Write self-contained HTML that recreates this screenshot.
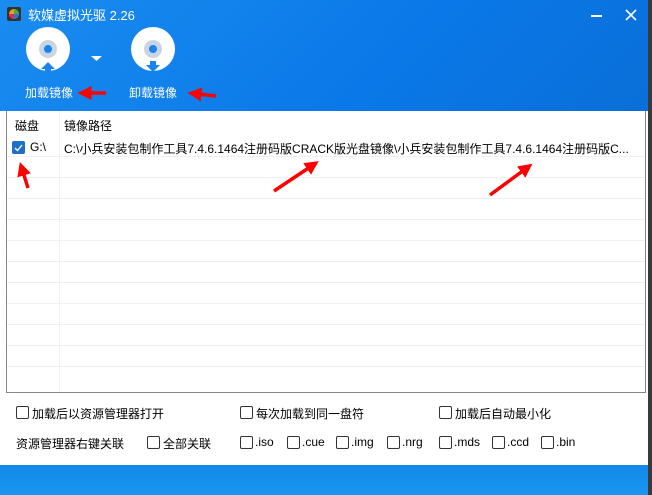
<!DOCTYPE html>
<html><head><meta charset="utf-8"><style>
*{margin:0;padding:0;box-sizing:border-box}
body{width:652px;height:495px;overflow:hidden;background:#fff;position:relative;font-family:"Liberation Sans","Noto Sans CJK SC",sans-serif;font-size:12px;color:#000}
.hdr{position:absolute;left:0;top:0;width:648px;height:111px;background:linear-gradient(135deg,#1a8cf0,#0a78e8 60%,#0a6fd8)}
.title{position:absolute;left:28px;top:5px;color:#fff;font-size:13px}
.lbl{position:absolute;color:#fff;font-size:12px}
.frame{position:absolute;left:6px;top:111px;width:640px;height:282px;border:1px solid #828790;border-top:none;background:#fff}
.row{position:absolute;left:0;width:638px;border-bottom:1px solid #f0f0f0;height:21px}
.vline{position:absolute;left:52px;top:0;bottom:0;border-left:1px solid #f0f0f0}
.cb{position:absolute;width:13px;height:13px;border:1px solid #333;border-radius:2px;background:#fff}
.t{position:absolute;white-space:nowrap}
.foot{position:absolute;left:0;top:465px;width:648px;height:30px;background:linear-gradient(#1288e8,#1a96f2)}
.side{position:absolute;left:648px;top:0;width:4px;height:495px;background:#3a3a3a}
</style></head><body>
<div class="hdr"></div>
<div class="side"></div>
<svg style="position:absolute;left:7px;top:7px" width="14" height="14"><rect width="14" height="14" rx="2" fill="#333"/><circle cx="7" cy="7" r="5" fill="#e8a020"/><path d="M7 7L7 2A5 5 0 0 1 12 7Z" fill="#40b040"/><path d="M7 7L12 7A5 5 0 0 1 7 12Z" fill="#3070e0"/><path d="M7 7L7 12A5 5 0 0 1 2 7Z" fill="#e03050"/></svg>
<div class="title">软媒虚拟光驱 2.26</div>
<svg style="position:absolute;left:590px;top:8px" width="50" height="14"><rect x="1" y="7" width="11" height="2" fill="#fff"/><path d="M36 2L46 12M46 2L36 12" stroke="#fff" stroke-width="1.6"/></svg>
<svg style="position:absolute;left:0;top:0" width="240" height="110">
<circle cx="48" cy="49" r="22" fill="#fff"/><circle cx="48" cy="49" r="9" fill="#c8d6e4"/><circle cx="48" cy="49" r="4" fill="#1a84ec"/>
<path d="M41 69L48 62L55 69Z M45 69h6v3h-6z" fill="#1a84ec"/>
<path d="M91 56h11l-5.5 5z" fill="#fff"/>
<circle cx="153" cy="49" r="22" fill="#fff"/><circle cx="153" cy="49" r="9" fill="#c8d6e4"/><circle cx="153" cy="49" r="4" fill="#1a84ec"/>
<path d="M150 61h6v4h4l-7 7l-7-7h4z" fill="#1a84ec"/>
</svg>
<div class="lbl" style="left:25px;top:84px">加载镜像</div>
<div class="lbl" style="left:129px;top:84px">卸载镜像</div>
<div class="frame">
<div class="row" style="top:0;height:25px;border-bottom:none"></div>
<div class="vline" style="top:0"></div>
<div class="t" style="left:8px;top:6px">磁盘</div>
<div class="t" style="left:57px;top:6px">镜像路径</div>
<div class="row" style="top:25px"></div>
<div class="row" style="top:46px"></div><div class="row" style="top:67px"></div><div class="row" style="top:88px"></div><div class="row" style="top:109px"></div><div class="row" style="top:130px"></div><div class="row" style="top:151px"></div><div class="row" style="top:172px"></div><div class="row" style="top:193px"></div><div class="row" style="top:214px"></div><div class="row" style="top:235px"></div><div class="row" style="top:256px;border-bottom:none"></div>
<div style="position:absolute;left:5px;top:30px;width:13px;height:13px;background:#1e6fc8;border-radius:2px"></div>
<svg style="position:absolute;left:5px;top:30px" width="13" height="13"><path d="M3 7l2.5 2.5L10 4" stroke="#fff" stroke-width="1.3" fill="none"/></svg>
<div class="t" style="left:23px;top:29px">G:\</div>
<div class="t" style="left:57px;top:29px">C:\小兵安装包制作工具7.4.6.1464注册码版CRACK版光盘镜像\小兵安装包制作工具7.4.6.1464注册码版C...</div>
</div>
<svg style="position:absolute;left:0;top:0" width="652" height="495">
<defs><marker id="a" markerWidth="4" markerHeight="4" refX="1" refY="2" orient="auto"><path d="M0 0L4 2L0 4Z" fill="#f00"/></marker></defs>
<g stroke="#f00" stroke-width="3.5" fill="none" marker-end="url(#a)">
<path d="M106 93L88 93"/><path d="M216 96L198 94"/>
<path d="M28 188L23 172"/>
<path d="M274 191L310 167"/><path d="M490 195L524 170"/>
</g></svg>
<div class="cb" style="left:16px;top:406px"></div><div class="t" style="left:32px;top:405px">加载后以资源管理器打开</div>
<div class="cb" style="left:240px;top:406px"></div><div class="t" style="left:256px;top:405px">每次加载到同一盘符</div>
<div class="cb" style="left:439px;top:406px"></div><div class="t" style="left:455px;top:405px">加载后自动最小化</div>
<div class="t" style="left:16px;top:435px">资源管理器右键关联</div>
<div class="cb" style="left:147px;top:436px"></div><div class="t" style="left:163px;top:435px">全部关联</div>
<div class="cb" style="left:240px;top:436px"></div><div class="t" style="left:255px;top:435px">.iso</div>
<div class="cb" style="left:287px;top:436px"></div><div class="t" style="left:302px;top:435px">.cue</div>
<div class="cb" style="left:336px;top:436px"></div><div class="t" style="left:351px;top:435px">.img</div>
<div class="cb" style="left:387px;top:436px"></div><div class="t" style="left:402px;top:435px">.nrg</div>
<div class="cb" style="left:439px;top:436px"></div><div class="t" style="left:454px;top:435px">.mds</div>
<div class="cb" style="left:492px;top:436px"></div><div class="t" style="left:507px;top:435px">.ccd</div>
<div class="cb" style="left:541px;top:436px"></div><div class="t" style="left:556px;top:435px">.bin</div>
<div class="foot"></div>
</body></html>
